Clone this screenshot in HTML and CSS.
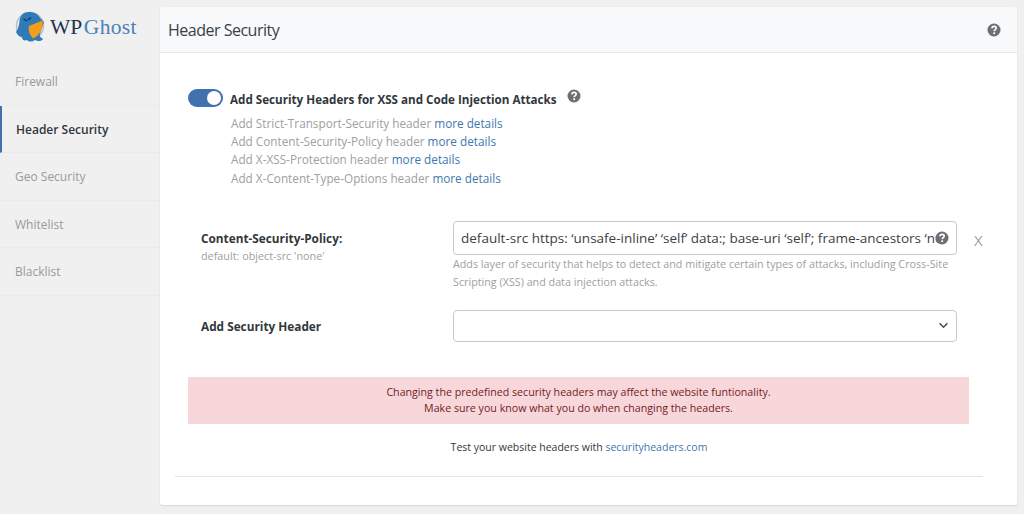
FILE: index.html
```html
<!DOCTYPE html>
<html lang="en">
<head>
<meta charset="utf-8">
<title>WP Ghost - Header Security</title>
<link rel="stylesheet" href="styles.css">
</head>
<body>
<div class="app">
  <aside class="sidebar">
    <div class="logo">
      <svg class="logo-mark" viewBox="0 0 33 32" width="33" height="32" aria-hidden="true">
        <circle cx="16" cy="15" r="13.500" fill="none" stroke="#b9bdd0" stroke-width="1.500"/>
        <path d="M2 21C4 18 5 15 5.500 10C6 4 10 1 15 1C20 1 24 3 26 7L30 11L26 23C25 26 28 27 29 28C27 31 23 30 21 29C18 31 15 31 13 29C10 30 8 29 8 26C6 26 3 24 2 21Z" fill="#2f7bb8"/>
        <path d="M15 15L28.500 9.500C29.500 17 26.500 24 19 27.500C15.500 24 14 19 15 15Z" fill="#f59c1a"/>
        <path d="M9.500 8L13 10M17 6.500L13.500 9" stroke="#17324f" stroke-width="1.300" fill="none"/>
      </svg>
      <span class="logo-text"><span class="logo-wp">WP</span> <span class="logo-ghost">Ghost</span></span>
    </div>
    <nav class="nav">
      <a class="nav-item">Firewall</a>
      <a class="nav-item active">Header Security</a>
      <a class="nav-item">Geo Security</a>
      <a class="nav-item">Whitelist</a>
      <a class="nav-item">Blacklist</a>
    </nav>
  </aside>
  <main class="card">
    <header class="card-head">
      <h1 class="card-title">Header Security</h1>
      <svg class="help" viewBox="0 0 14 14" width="14" height="14" aria-hidden="true"><circle cx="7" cy="7" r="6.500" fill="#6c6f73"/><path d="M4.900 5.400C5 4 6 3.400 7.100 3.400C8.400 3.400 9.200 4.200 9.200 5.200C9.200 6.600 7.200 6.700 7.200 8.200" fill="none" stroke="#fff" stroke-width="1.600"/><rect x="6.300" y="9.300" width="1.800" height="1.800" fill="#fff"/></svg>
    </header>
    <div class="card-body">
      <section class="switch-block">
        <div class="switch-row">
          <span class="toggle"><span class="knob"></span></span>
          <strong class="switch-label">Add Security Headers for XSS and Code Injection Attacks</strong>
          <svg class="help switch-help" viewBox="0 0 14 14" width="14" height="14" aria-hidden="true"><circle cx="7" cy="7" r="6.500" fill="#6c6f73"/><path d="M4.900 5.400C5 4 6 3.400 7.100 3.400C8.400 3.400 9.200 4.200 9.200 5.200C9.200 6.600 7.200 6.700 7.200 8.200" fill="none" stroke="#fff" stroke-width="1.600"/><rect x="6.300" y="9.300" width="1.800" height="1.800" fill="#fff"/></svg>
        </div>
        <ul class="sub-list">
          <li>Add Strict-Transport-Security header <a class="link">more details</a></li>
          <li>Add Content-Security-Policy header <a class="link">more details</a></li>
          <li>Add X-XSS-Protection header <a class="link">more details</a></li>
          <li>Add X-Content-Type-Options header <a class="link">more details</a></li>
        </ul>
      </section>
      <section class="field field-csp">
        <div class="field-label">
          <strong class="label-title">Content-Security-Policy:</strong>
          <span class="label-note">default: object-src 'none'</span>
        </div>
        <div class="field-control">
          <div class="input-wrap">
            <input class="input" type="text" value="default-src https: ‘unsafe-inline’ ‘self’ data:; base-uri ‘self’; frame-ancestors ‘none’">
            <svg class="help input-help" viewBox="0 0 14 14" width="14" height="14" aria-hidden="true"><circle cx="7" cy="7" r="6.500" fill="#6c6f73"/><path d="M4.900 5.400C5 4 6 3.400 7.100 3.400C8.400 3.400 9.200 4.200 9.200 5.200C9.200 6.600 7.200 6.700 7.200 8.200" fill="none" stroke="#fff" stroke-width="1.600"/><rect x="6.300" y="9.300" width="1.800" height="1.800" fill="#fff"/></svg>
          </div>
          <p class="help-text">Adds layer of security that helps to detect and mitigate certain types of attacks, including Cross-Site Scripting (XSS) and data injection attacks.</p>
        </div>
        <span class="remove">X</span>
      </section>
      <section class="field field-add">
        <div class="field-label"><strong class="label-title">Add Security Header</strong></div>
        <div class="field-control">
          <div class="select">
            <svg viewBox="0 0 12 8" width="11" height="7" aria-hidden="true"><path d="M1.500 1.500L6 6L10.500 1.500" fill="none" stroke="#4a4f54" stroke-width="1.800"/></svg>
          </div>
        </div>
        <span class="remove-space"></span>
      </section>
      <div class="alert">
        <p>Changing the predefined security headers may affect the website funtionality.</p>
        <p>Make sure you know what you do when changing the headers.</p>
      </div>
      <p class="test-line">Test your website headers with <a class="link">securityheaders.com</a></p>
      <hr class="rule">
    </div>
  </main>
</div>
</body>
</html>
```
FILE: styles.css
```css
* { box-sizing: border-box; }
html, body { margin: 0; height: 100%; }
body {
  background: #f0f0f1;
  font-family: "Open Sans", "Liberation Sans", sans-serif;
  color: #32373c;
  overflow: hidden;
}
p, ul, h1 { margin: 0; padding: 0; }
.app { display: flex; height: 514px; }
.sidebar { width: 160px; flex: none; }
.logo { display: flex; align-items: center; height: 58px; padding: 0 0 4px 14px; gap: 3px; }
.logo-mark { flex: none; }
.logo-text { font-family: "Liberation Serif", serif; font-size: 21.500px; white-space: nowrap; word-spacing: -3px; }
.logo-wp { color: #1d3550; }
.logo-ghost { color: #4a83b5; letter-spacing: 0.3px; }
.nav { display: flex; flex-direction: column; }
.nav-item {
  display: flex; align-items: center;
  height: 47.500px;
  padding: 1px 0 0 15px;
  font-size: 12px;
  color: #9a9a9a;
  border-bottom: 1px solid #e5ebf3;
}
.nav-item.active {
  color: #32373c; font-weight: 600; padding-left: 14px;
  border-left: 2px solid #4272ae;
}
.card {
  flex: 1; margin: 7px 7px 9px 0;
  background: #fff;
  border-radius: 3px;
  box-shadow: 0 1px 2px rgba(0,0,0,.1);
  display: flex; flex-direction: column;
}
.card-head {
  height: 46px; flex: none;
  display: flex; align-items: center; justify-content: space-between;
  padding: 0 16px 0 8px;
  background: #f7f9fb;
  border-bottom: 1px solid #e2e8f0;
}
.card-title { font-size: 16px; font-weight: 400; color: #3a3f44; letter-spacing: -0.5px; }
.help { flex: none; display: block; }
.card-body { padding: 35px 34px 0 15px; }
.switch-block { padding-left: 13px; }
.switch-row { display: flex; align-items: center; height: 19px; }
.toggle {
  width: 35px; height: 18px; border-radius: 9px; background: #4272ae;
  display: flex; justify-content: flex-end; align-items: center; padding-right: 2px; flex: none;
}
.knob { width: 14px; height: 14px; border-radius: 50%; background: #fff; }
.switch-label { margin: 3px 0 0 7px; font-size: 11.650px; font-weight: 700; color: #32373c; }
.switch-help { margin-left: 10px; margin-top: -3px; }
.sub-list { list-style: none; padding: 6.500px 0 0 43px; font-size: 11.750px; line-height: 18.400px; color: #a0a0a0; }
.link { color: #3f78ae; }
.field { display: flex; padding-left: 26px; }
.field-label { width: 252px; flex: none; display: flex; flex-direction: column; }
.field-control { width: 504px; flex: none; }
.field-csp { margin-top: 33.500px; }
.field-csp .field-label { padding-top: 9px; }
.label-title { font-size: 11.800px; font-weight: 700; color: #32373c; }
.label-note { font-size: 10.800px; color: #a0a0a0; margin-top: 2px; }
.input-wrap { position: relative; }
.input {
  display: block; width: 100%; height: 34px;
  border: 1px solid #c8c8cc; border-radius: 4px;
  padding: 1px 8px 0 7px; background: #fff;
  font: 400 13.500px "Open Sans", sans-serif; color: #3c4146;
  outline: none;
}
.input-help { position: absolute; right: 8px; top: 10px; }
.help-text { font-size: 10.750px; line-height: 18px; color: #a0a0a0; }
.remove { font-size: 15px; color: #9aa0a6; margin: 9px 0 0 17px; }
.remove-space { width: 24px; }
.field-add { margin-top: 19px; align-items: center; }
.select {
  height: 32px; border: 1px solid #c8c8cc; border-radius: 4px;
  display: flex; align-items: center; justify-content: flex-end; padding-right: 7px;
}
.alert {
  margin: 35px 14px 0 13px; height: 47px; padding-top: 7px;
  background: #f8d7da; color: #721c24;
  text-align: center; font-size: 10.650px; line-height: 16.500px;
}
.test-line { text-align: center; font-size: 10.500px; margin-top: 16px; color: #32373c; }
.rule { border: 0; border-top: 1px solid #e5e5e5; margin: 22px 0 0; }
```
